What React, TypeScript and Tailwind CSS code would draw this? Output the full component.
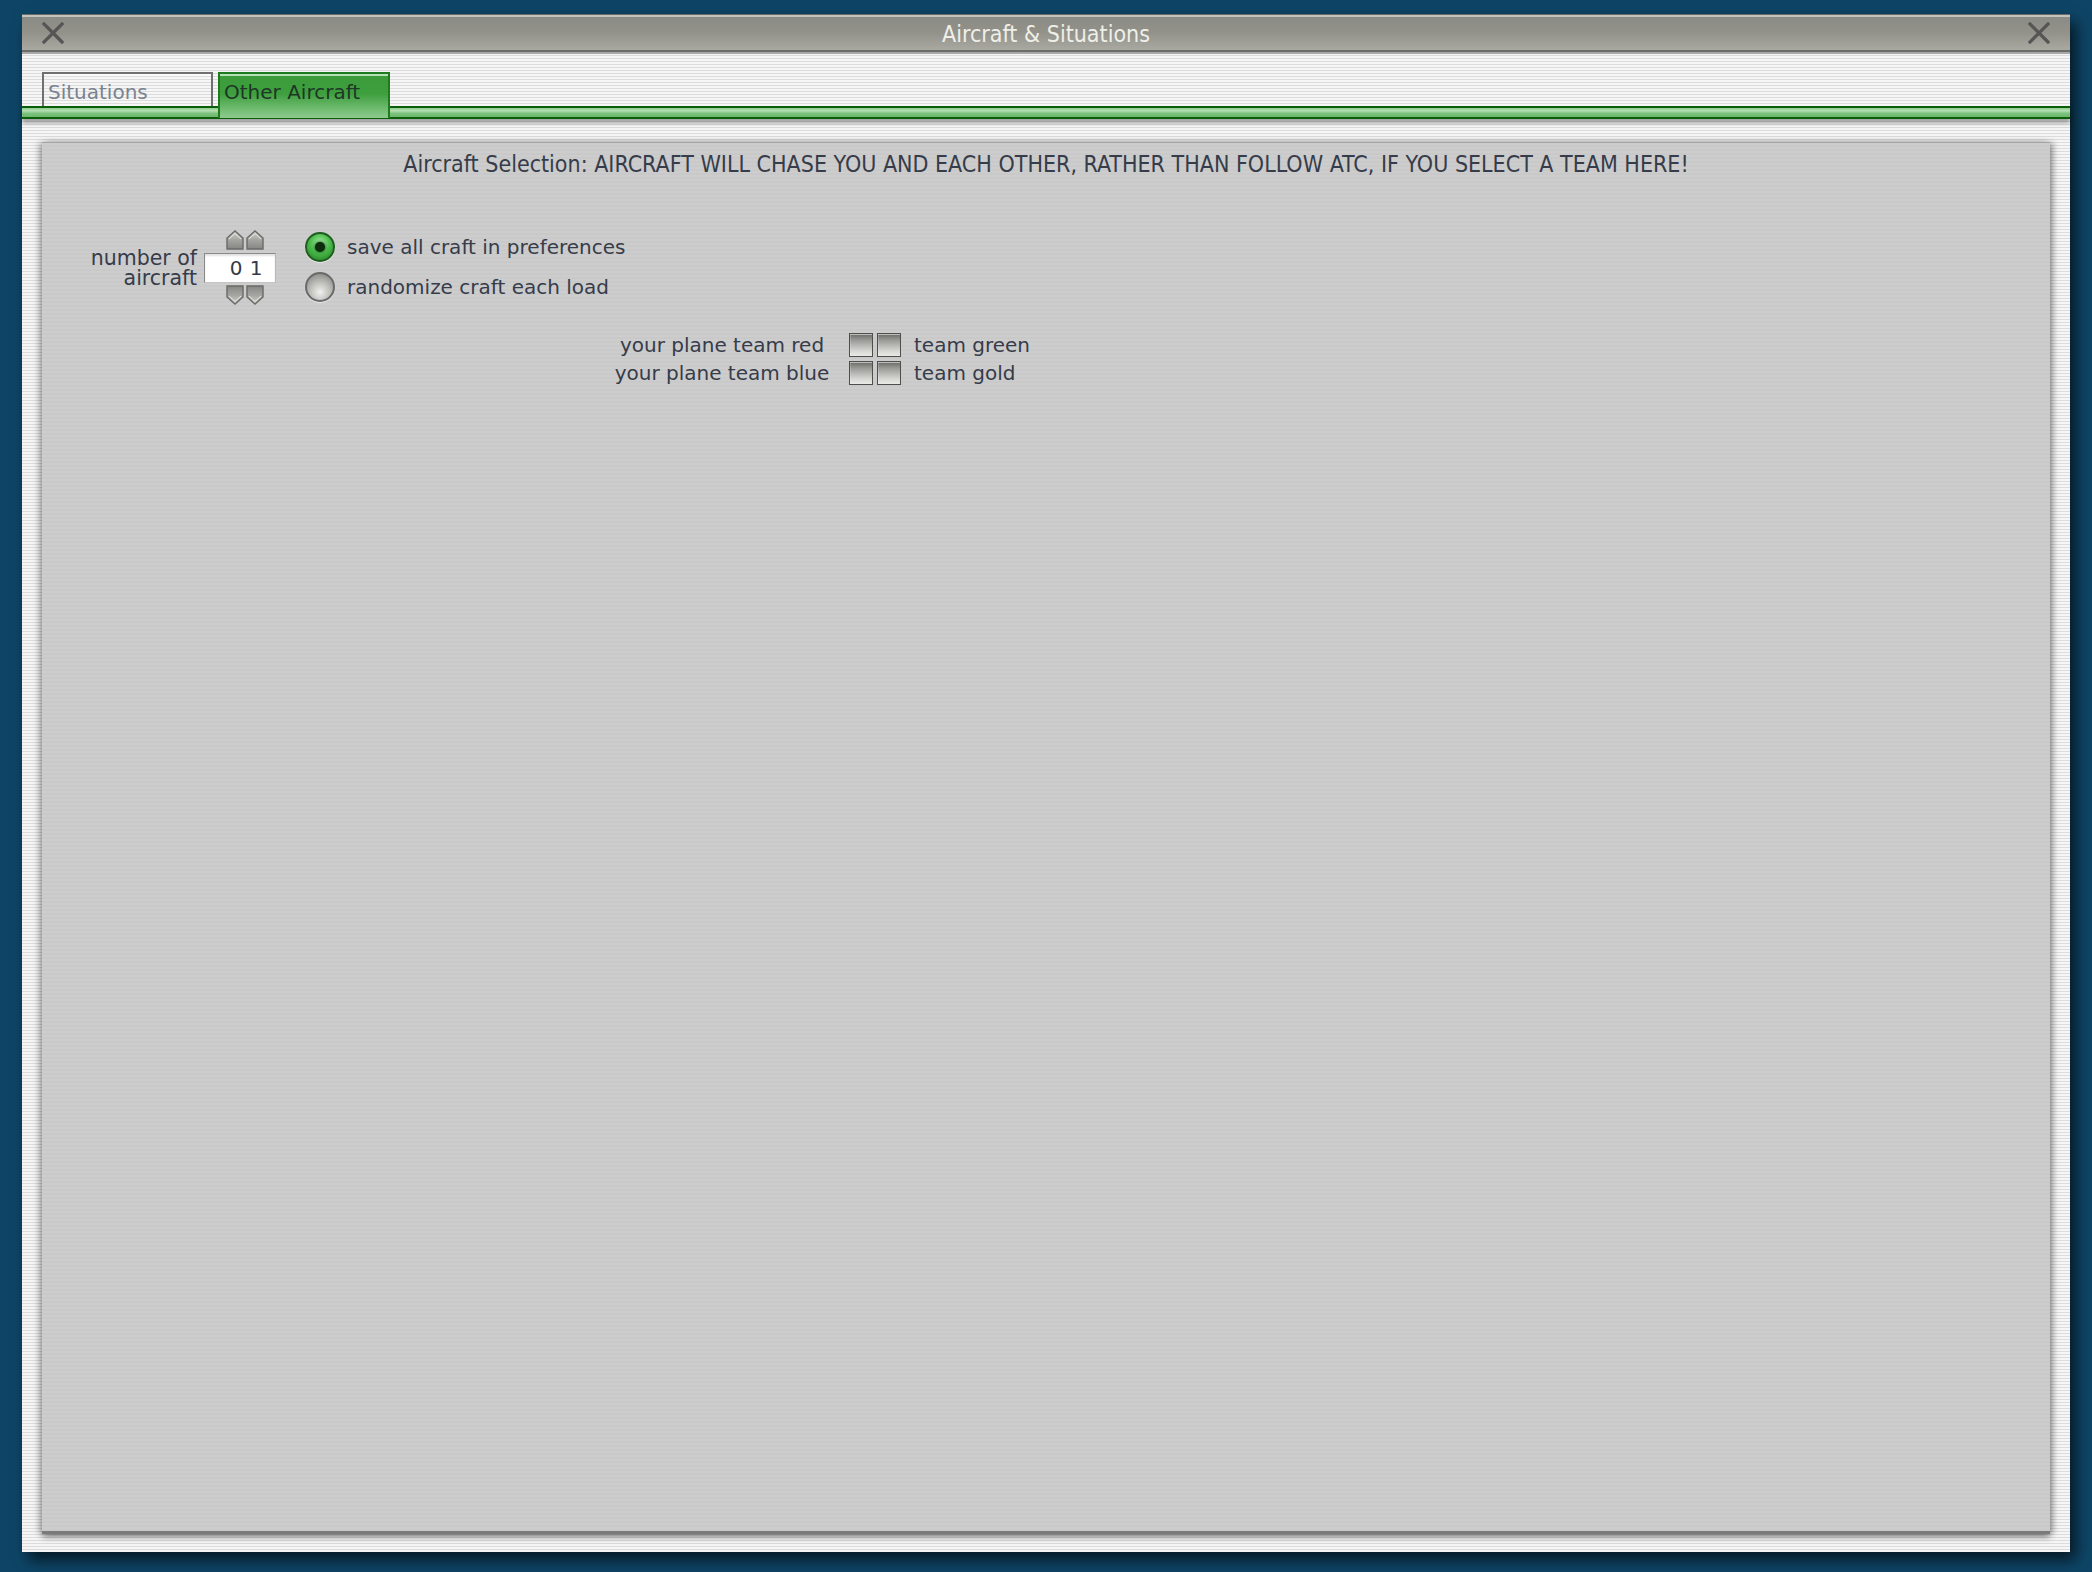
import React from 'react';

const body = "font-['DejaVu_Sans','Liberation_Sans',sans-serif]";
const condensed = "font-['DejaVu_Sans_Condensed','DejaVu_Sans',sans-serif] [font-stretch:condensed]";

function CloseIcon() {
  return (
    <svg width="22" height="22" viewBox="0 0 22 22">
      <path d="M2 2 L20 20 M20 2 L2 20" stroke="#555555" strokeWidth="3.2" strokeLinecap="square" />
    </svg>
  );
}

function Arrow({ down }: { down?: boolean }) {
  return (
    <svg width="18" height="20" viewBox="0 0 18 20" className={down ? 'rotate-180' : ''}>
      <defs>
        <linearGradient id="arrowFill" x1="0" y1="0" x2="0" y2="1">
          <stop offset="0" stopColor="#cfcfcb" />
          <stop offset="0.5" stopColor="#a4a4a0" />
          <stop offset="1" stopColor="#868682" />
        </linearGradient>
      </defs>
      <path d="M1 19 L1 8 L9 1 L17 8 L17 19 Z" fill="url(#arrowFill)" stroke="#6a6a68" strokeWidth="1.4" />
      <path d="M3 9 L9 3.5 L15 9" fill="none" stroke="#e6e6e2" strokeWidth="1" />
    </svg>
  );
}

function Spinner() {
  return (
    <div className="flex w-[72px] flex-col">
      <div className="flex gap-[2px] pl-[22px]">
        <Arrow />
        <Arrow />
      </div>
      <div className="mt-[3px] flex h-[30px] items-center border border-t-[#8a8a8a] border-l-[#8a8a8a] border-r-[#b8b8b8] border-b-[#c4c4c4] bg-white pl-[21px] shadow-[inset_0_2px_2px_rgba(0,0,0,0.12)]">
        <span className="w-[20px] text-center text-[20px] leading-none text-[#343a46]">0</span>
        <span className="w-[20px] text-center text-[20px] leading-none text-[#343a46]">1</span>
      </div>
      <div className="mt-[2px] flex gap-[2px] pl-[22px]">
        <Arrow down />
        <Arrow down />
      </div>
    </div>
  );
}

function Radio({ on, label }: { on?: boolean; label: string }) {
  return (
    <div className="flex h-[40px] items-center gap-[12px]">
      {on ? (
        <span className="flex h-[30px] w-[30px] items-center justify-center rounded-full border-2 border-[#1f5e1f] bg-[radial-gradient(circle_at_50%_35%,#a6eea6_0%,#4cbc4c_45%,#1f7a1f_100%)] shadow-[0_1px_1px_rgba(255,255,255,0.6)]">
          <span className="h-[10px] w-[10px] rounded-full bg-[#0c2e0c] shadow-[0_0_3px_#0c2e0c]" />
        </span>
      ) : (
        <span className="h-[30px] w-[30px] rounded-full border-2 border-[#6a6a6a] bg-[radial-gradient(circle_at_50%_70%,#f0f0ee_0%,#bdbdba_45%,#7c7c7a_100%)] shadow-[0_1px_1px_rgba(255,255,255,0.6)]" />
      )}
      <span className="text-[20px] leading-none text-[#363c4a]">{label}</span>
    </div>
  );
}

function Check() {
  return (
    <span className="h-[24px] w-[24px] border border-[#4e4e4c] bg-[linear-gradient(180deg,#6a6a68_0%,#9c9c98_30%,#d4d4d0_75%,#eaeae6_100%)] shadow-[inset_0_1px_0_rgba(255,255,255,0.55),inset_1px_0_0_rgba(255,255,255,0.2)]" />
  );
}

function TeamRow({ left, right }: { left: string; right: string }) {
  return (
    <div className="flex h-[28px] items-center">
      <span className="w-[244px] whitespace-nowrap text-center text-[20px] leading-none text-[#363c4a]">{left}</span>
      <div className="ml-[5px] flex gap-[4px]">
        <Check />
        <Check />
      </div>
      <span className="ml-[13px] whitespace-nowrap text-[20px] leading-none text-[#363c4a]">{right}</span>
    </div>
  );
}

export default function App() {
  return (
    <div className={`h-[1572px] w-[2092px] overflow-hidden bg-[#0e4566] pl-[22px] pt-[14px] ${body}`}>
      <div className="flex h-[1538px] w-[2048px] flex-col bg-[image:repeating-linear-gradient(180deg,#f6f6f6_0px,#f6f6f6_2px,#dcdcdc_2px,#dcdcdc_3px)] shadow-[6px_8px_14px_rgba(0,0,0,0.65)]">
        {/* Title bar */}
        <div className="relative flex h-[38px] shrink-0 items-center border-t border-b-2 border-t-[#6a6a68] border-b-[#6c6c6a] bg-[linear-gradient(180deg,#8a8a84_0%,#92928b_50%,#a9a9a2_100%)] px-[20px] shadow-[inset_0_4px_0_-2px_#c4c4bc,0_2px_0_#a8a8a8]">
          <CloseIcon />
          <span className={`flex-1 pt-[3px] text-center text-[23px] leading-none text-[#efefe8] ${condensed}`}>Aircraft &amp; Situations</span>
          <CloseIcon />
        </div>

        {/* Tabs */}
        <div className="flex h-[54px] shrink-0 items-end gap-[5px] pl-[20px]">
          <div className="flex h-[34px] w-[171px] items-center border-2 border-b-0 border-[#707070] pl-[4px] pt-[3px] shadow-[inset_0_2px_0_#fafafa]">
            <span className="text-[20px] leading-none text-[#7a8290]">Situations</span>
          </div>
          <div className="relative z-10 -mb-[12px] flex h-[46px] w-[172px] items-start border-2 border-b-0 border-[#1d7a1d] bg-[linear-gradient(180deg,#3b9b3b_0%,#3e9f3e_45%,#6ab86a_75%,#8fcb8f_100%)] pl-[4px] pt-[8px] shadow-[inset_0_2px_0_#b6e0b6]">
            <span className="text-[20px] leading-none text-[#1e3626]">Other Aircraft</span>
          </div>
        </div>

        {/* Green bar */}
        <div className="h-[13px] shrink-0 border-y-2 border-[#0a5e0a] bg-[linear-gradient(180deg,#8ccb8c_0%,#b4deb4_30%,#7cc27c_60%,#6cb86c_100%)] shadow-[0_4px_4px_rgba(0,0,0,0.35)]" />

        {/* Content panel */}
        <div className="flex flex-1 flex-col px-[20px] pb-[18px] pt-[23px]">
          <div className="flex flex-1 flex-col border-t border-b-[3px] border-t-[#a4a4a4] border-b-[#7a7a7a] bg-[image:repeating-linear-gradient(180deg,#cdcdcd_0px,#cdcdcd_2px,#c9c9c9_2px,#c9c9c9_4px)] shadow-[0_4px_6px_rgba(0,0,0,0.3),-4px_0_6px_rgba(0,0,0,0.2),4px_0_6px_rgba(0,0,0,0.25)]">
            <div className={`pt-[8px] text-center text-[23px] leading-[27px] text-[#363c4a] ${condensed}`}>
              Aircraft Selection: AIRCRAFT WILL CHASE YOU AND EACH OTHER, RATHER THAN FOLLOW ATC, IF YOU SELECT A TEAM HERE!
            </div>

            <div className="ml-[45px] mt-[49px] flex items-center">
              <div className="w-[110px] whitespace-nowrap pt-[2px] text-right text-[20.5px] leading-[20px] text-[#363c4a]">
                number of
                <br />
                aircraft
              </div>
              <div className="ml-[7px]">
                <Spinner />
              </div>
              <div className="ml-[29px] flex flex-col">
                <Radio on label="save all craft in preferences" />
                <Radio label="randomize craft each load" />
              </div>
            </div>

            <div className="ml-[558px] mt-[24px] flex flex-col">
              <TeamRow left="your plane team red" right="team green" />
              <TeamRow left="your plane team blue" right="team gold" />
            </div>
          </div>
        </div>
      </div>
    </div>
  );
}
